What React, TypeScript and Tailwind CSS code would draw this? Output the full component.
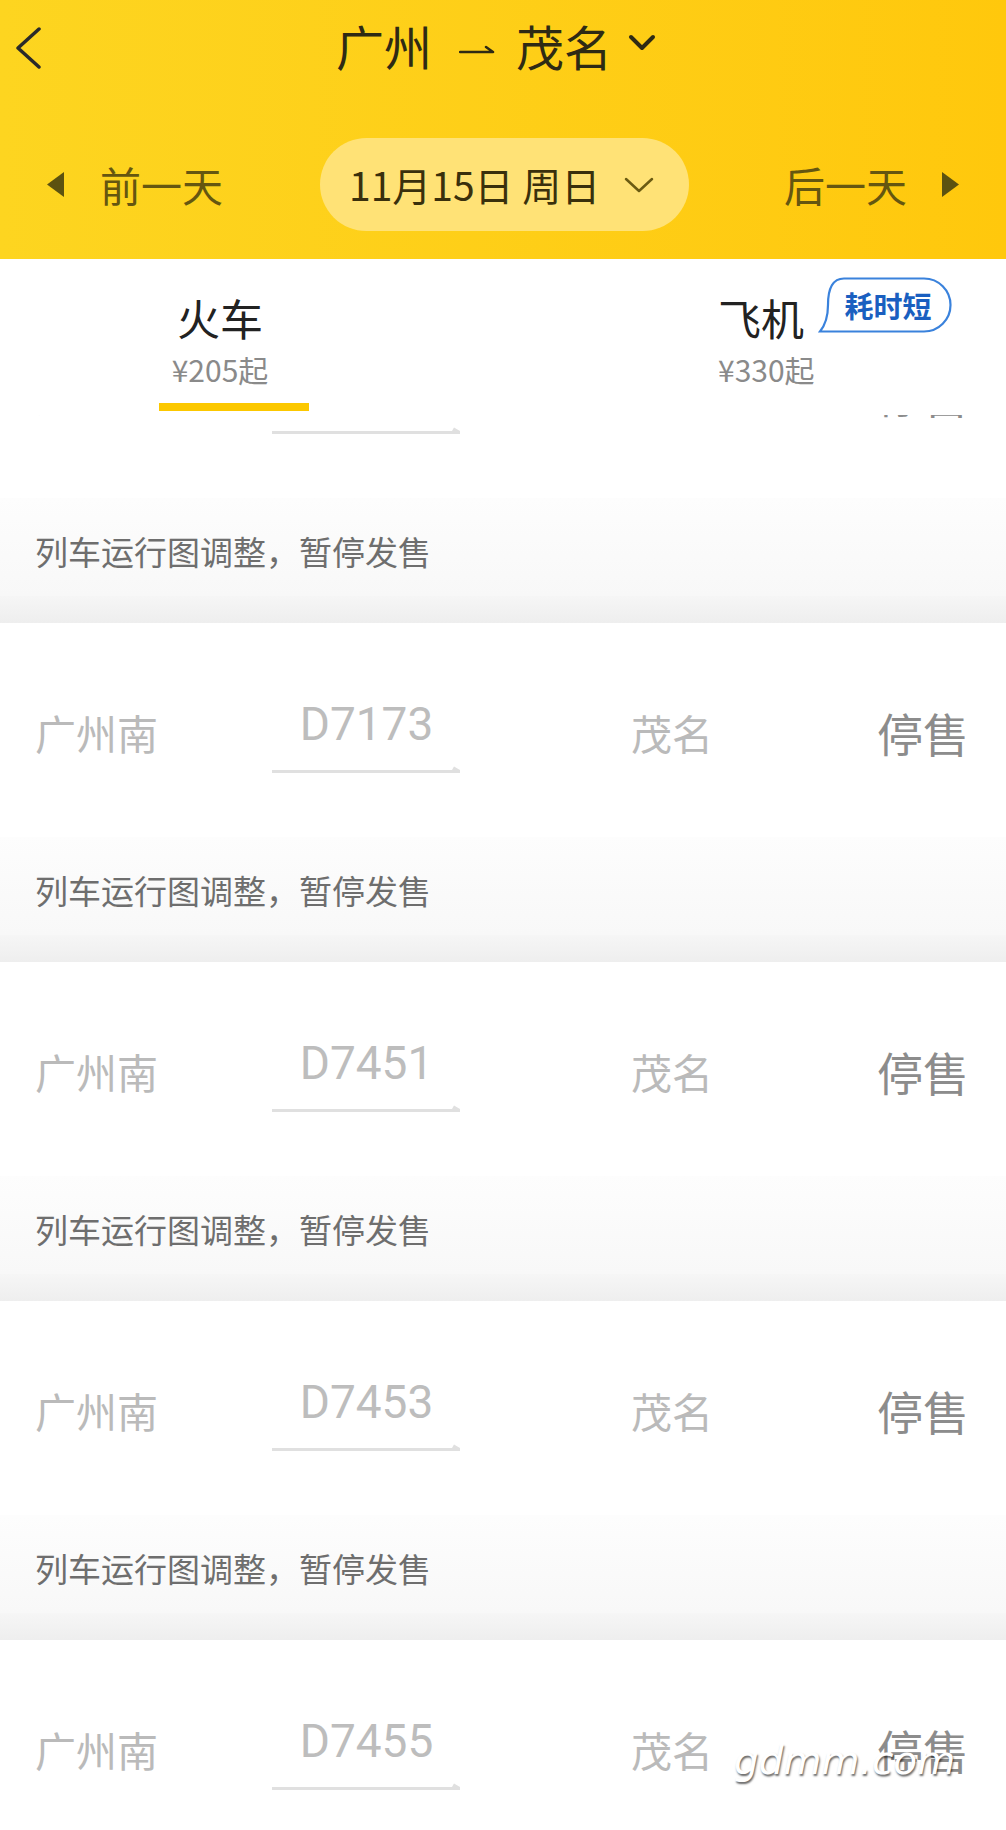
import React from "react";

type Row = { no: string };

const rows: Row[] = [
  { no: "D7171" },
  { no: "D7173" },
  { no: "D7451" },
  { no: "D7453" },
  { no: "D7455" },
];

function Card({ no, first }: { no: string; first?: boolean }) {
  return (
    <div className={first ? "flex flex-col mt-[-131px]" : "flex flex-col"}>
      <div className="h-[214px] flex items-center pl-[35px] pr-[37px] pt-1 bg-white">
        <div className="w-[237px] text-[41px] leading-none text-[#bababa]">广州南</div>
        <div className="w-[189px] flex flex-col items-center mt-[10px]">
          <div className="font-['Roboto',sans-serif] text-[46px] leading-[46px] text-[#bdbdbd]">{no}</div>
          <svg className="mt-[19px]" width="189" height="8" viewBox="0 0 189 8">
            <line x1="0" y1="5.5" x2="188" y2="5.5" stroke="#e0e0e0" strokeWidth="3" />
            <path d="M180 4 L188 4 L182 0.5 Z" fill="#e0e0e0" />
          </svg>
        </div>
        <div className="ml-[170px] text-[41px] leading-none text-[#bababa]">茂名</div>
        <div className="ml-auto text-[46px] leading-none text-[#8c8c8c]">停售</div>
      </div>
      <div className="h-[98px] pl-[35px] pt-[37px] bg-linear-to-b from-[#fdfdfd] to-[#f8f8f8]">
        <div className="text-[33px] leading-[33px] text-[#6e6e6e]">列车运行图调整，暂停发售</div>
      </div>
      <div className="h-[27px] bg-linear-to-b from-[#f6f6f6] to-[#eeeeee]" />
    </div>
  );
}

export default function App() {
  return (
    <div className="relative w-[1006px] h-[1830px] overflow-hidden bg-white flex flex-col font-['Noto_Sans_CJK_SC','Noto_Sans',sans-serif]">
      {/* Header */}
      <div className="h-[259px] shrink-0 bg-linear-to-r from-[#fdd520] to-[#ffc80c] flex flex-col">
        <div className="h-[95px] pb-[6px] grid grid-cols-[1fr_auto_1fr] items-center">
          <div className="pl-[14px] pt-[6px] flex items-center">
            <svg width="28" height="42" viewBox="0 0 28 42">
              <path d="M25 2 L4 21 L25 40" fill="none" stroke="#2a2a2a" strokeWidth="3.5" strokeLinecap="round" strokeLinejoin="round" />
            </svg>
          </div>
          <div className="mr-[14px] flex items-center text-[#2e2a14]">
            <span className="text-[48px] leading-none">广州</span>
            <svg className="ml-[27px] mt-[8px]" width="36" height="12" viewBox="0 0 36 12">
              <path d="M1 9 H34 M34 9 L27 4" fill="none" stroke="#2e2a14" strokeWidth="2.5" strokeLinecap="round" />
            </svg>
            <span className="ml-[21px] text-[48px] leading-none">茂名</span>
            <svg className="ml-[16px] mt-[-4px]" width="28" height="18" viewBox="0 0 28 18">
              <path d="M3 3 L14 14 L25 3" fill="none" stroke="#2e2a14" strokeWidth="4" strokeLinecap="round" strokeLinejoin="round" />
            </svg>
          </div>
          <div />
        </div>
        <div className="h-[164px] pt-[15px] flex items-center pl-[47px] pr-[47px]">
          <div className="w-[273px] flex items-center">
            <svg width="17" height="25" viewBox="0 0 17 25">
              <path d="M17 0 L0 12.5 L17 25 Z" fill="#5c5210" />
            </svg>
            <span className="ml-[36px] text-[41px] leading-none text-[#655610]">前一天</span>
          </div>
          <div className="w-[369px] h-[93px] rounded-full bg-[#ffe276] flex items-center pl-[29px]">
            <span className="text-[39px] leading-none text-[#3a300c]">11月15日 周日</span>
            <svg className="ml-[24px]" width="30" height="16" viewBox="0 0 30 16">
              <path d="M2 2 L15 14 L28 2" fill="none" stroke="#6b5b12" strokeWidth="2.5" strokeLinecap="round" strokeLinejoin="round" />
            </svg>
          </div>
          <div className="flex-1 flex items-center justify-end">
            <span className="text-[41px] leading-none text-[#655610]">后一天</span>
            <svg className="ml-[35px]" width="17" height="25" viewBox="0 0 17 25">
              <path d="M0 0 L17 12.5 L0 25 Z" fill="#5c5210" />
            </svg>
          </div>
        </div>
      </div>

      {/* Tabs */}
      <div className="h-[156px] shrink-0 bg-white flex">
        <div className="ml-[159px] w-[150px] flex flex-col pt-[37px]">
          <div className="w-[122px] flex flex-col items-center">
            <div className="text-[43px] leading-none text-[#222222]">火车</div>
            <div className="mt-[16px] text-[30px] leading-[29px] text-[#8a8a8a]">¥205起</div>
          </div>
          <div className="mt-[19px] w-[150px] h-[8px] bg-[#fcc800]" />
        </div>
        <div className="ml-[409px] flex flex-col pt-[19px]">
          <div className="flex items-start">
            <div className="mt-[18px] text-[43px] leading-none text-[#222222]">飞机</div>
            <div className="relative ml-[14px] mt-[-1px] w-[134px] h-[56px] flex items-center justify-center">
              <svg className="absolute inset-0" width="134" height="56" viewBox="0 0 134 56">
                <path
                  d="M26 1.5 H106 A26.5 26.5 0 0 1 106 54.5 H2 C8 47 10 38 10 28 C10 11 15 1.5 26 1.5 Z"
                  fill="#ffffff"
                  stroke="#3a82dc"
                  strokeWidth="2.2"
                />
              </svg>
              <span className="relative ml-[6px] text-[29px] leading-none font-bold text-[#1a5fc0]">耗时短</span>
            </div>
          </div>
          <div className="mt-[16px] text-[30px] leading-[29px] text-[#8a8a8a]">¥330起</div>
        </div>
      </div>

      {/* List */}
      <div className="flex-1 overflow-hidden flex flex-col">
        {rows.map((r, i) => (
          <Card key={r.no} no={r.no} first={i === 0} />
        ))}
      </div>

      {/* Watermark */}
      <div className="absolute left-[734px] top-[1741px] text-[39px] leading-none italic text-white font-['DejaVu_Sans',sans-serif] [text-shadow:1px_2px_2px_rgba(0,0,0,0.6)]">
        gdmm.com
      </div>
    </div>
  );
}
